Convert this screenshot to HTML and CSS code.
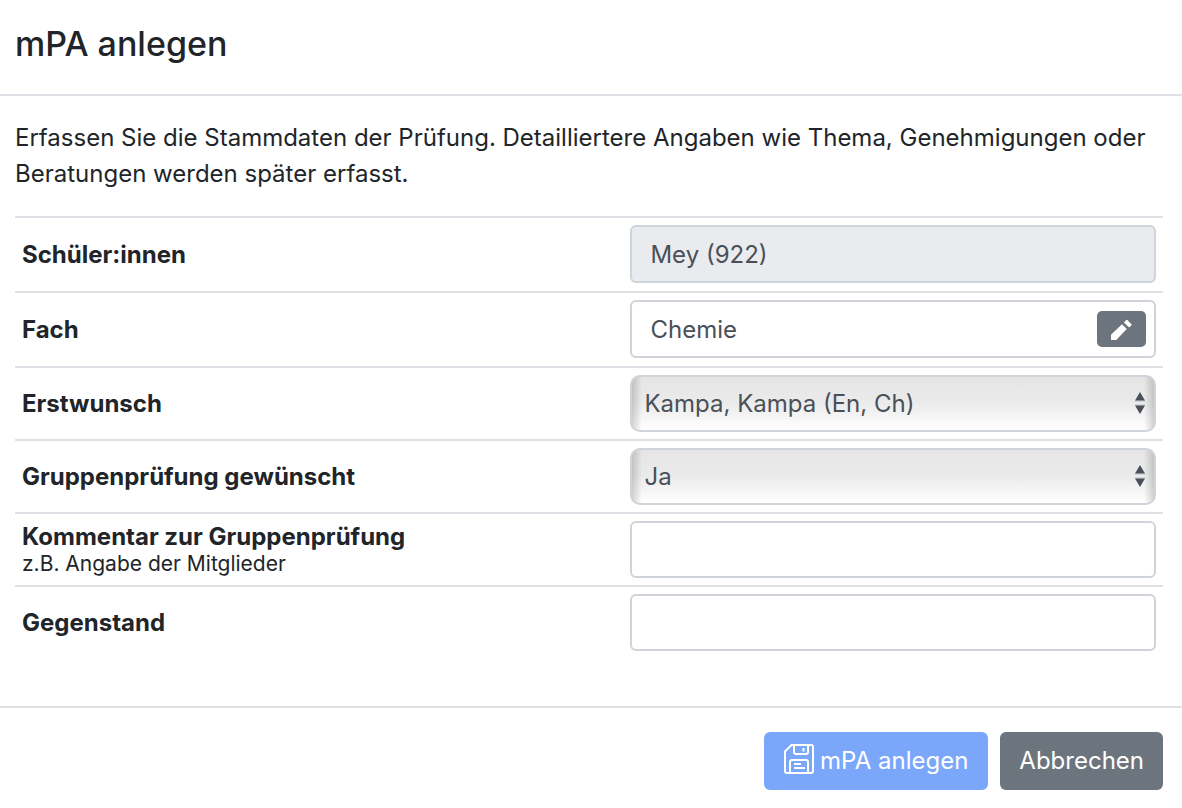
FILE: index.html
```
<!DOCTYPE html>
<html lang="de">
<head>
<meta charset="utf-8">
<meta name="viewport" content="width=device-width, initial-scale=1">
<title>mPA anlegen</title>
<link rel="stylesheet" href="styles.css">
</head>
<body>
<form class="dialog">
  <header class="dialog-header">
    <h1 class="dialog-title">mPA anlegen</h1>
  </header>
  <main class="dialog-body">
    <p class="intro">Erfassen Sie die Stammdaten der Prüfung. Detailliertere Angaben wie Thema, Genehmigungen oder Beratungen werden später erfasst.</p>
    <table class="fields">
      <tbody>
        <tr>
          <th scope="row"><label for="students">Schüler:innen</label></th>
          <td class="cell-tall"><input class="control control-tall control-locked" id="students" type="text" value="Mey (922)" readonly></td>
        </tr>
        <tr>
          <th scope="row"><label for="subject">Fach</label></th>
          <td class="cell-tall">
            <div class="field">
              <input class="control control-tall" id="subject" type="text" value="Chemie" readonly>
              <button class="edit" type="button" aria-label="Fach bearbeiten">
                <svg class="edit-icon" viewBox="0 0 22 22" aria-hidden="true"><path d="M0 16.500V22h5.500L16.500 10.500 11.500 5.500zM13.500 3.600L15.900 1Q16.500.4 17.200 1L21.400 5.400Q22 6 21.400 6.600L19 9z"/></svg>
              </button>
            </div>
          </td>
        </tr>
        <tr>
          <th scope="row"><label for="first-choice">Erstwunsch</label></th>
          <td>
            <div class="field">
              <select class="control control-select" id="first-choice"><option>Kampa, Kampa (En, Ch)</option></select>
              <svg class="arrows" viewBox="0 0 12 22" aria-hidden="true"><path class="arrow-line" d="M1 9h10M1 13h10"/><path d="M6 0l5 8.500H1zM1 13.500h10L6 22z"/></svg>
            </div>
          </td>
        </tr>
        <tr>
          <th scope="row"><label for="group">Gruppenprüfung gewünscht</label></th>
          <td>
            <div class="field">
              <select class="control control-select" id="group"><option>Ja</option><option>Nein</option></select>
              <svg class="arrows" viewBox="0 0 12 22" aria-hidden="true"><path class="arrow-line" d="M1 9h10M1 13h10"/><path d="M6 0l5 8.500H1zM1 13.500h10L6 22z"/></svg>
            </div>
          </td>
        </tr>
        <tr>
          <th scope="row"><label for="comment">Kommentar zur Gruppenprüfung</label><small class="hint" id="comment-hint">z.B. Angabe der Mitglieder</small></th>
          <td><input class="control" id="comment" type="text" aria-describedby="comment-hint"></td>
        </tr>
        <tr>
          <th scope="row"><label for="topic">Gegenstand</label></th>
          <td><input class="control" id="topic" type="text"></td>
        </tr>
      </tbody>
    </table>
  </main>
  <footer class="dialog-footer">
    <button class="button button-primary" type="submit">
      <svg class="save-icon" viewBox="0 0 30 30" aria-hidden="true"><path d="M7.500 1H27a2 2 0 0 1 2 2v24a2 2 0 0 1-2 2H3a2 2 0 0 1-2-2V7.500zM10 1v7a2 2 0 0 0 2 2h10a2 2 0 0 0 2-2V1M6 29V18a2 2 0 0 1 2-2h14a2 2 0 0 1 2 2v11M19.500 4v3.500M10 20h7M10 24h11"/></svg>
      <span>mPA anlegen</span>
    </button>
    <button class="button button-secondary" type="button">Abbrechen</button>
  </footer>
</form>
</body>
</html>
```
FILE: styles.css
```
* {
  box-sizing: border-box;
}

body {
  margin: 0;
  background: #fff;
  color: #212529;
  font-family: Inter, "Liberation Sans", sans-serif;
  font-size: 24px;
  line-height: 36px;
}

.dialog {
  display: flex;
  flex-direction: column;
}

.dialog-header {
  padding: 22px 15px 28px;
  border-bottom: 2px solid #dee2e6;
}

.dialog-title {
  margin: 0;
  font-size: 34px;
  font-weight: 500;
  line-height: 44px;
}

.dialog-body {
  padding: 24px 19px 48px 15px;
}

.intro {
  margin: 0 0 24px;
}

.fields {
  width: 100%;
  table-layout: fixed;
  border-spacing: 0;
}

.fields th,
.fields td {
  padding: 7px;
  border-top: 2px solid #dee2e6;
  text-align: left;
  vertical-align: middle;
}

.fields th {
  width: 53%;
  padding-top: 0;
  padding-bottom: 0;
  font-weight: 700;
  line-height: 28px;
}

.fields .cell-tall {
  padding-bottom: 8px;
}

.hint {
  display: block;
  font-size: 21px;
  font-weight: 400;
  line-height: 26px;
}

.field {
  position: relative;
}

.control {
  display: block;
  width: 100%;
  height: 57px;
  padding: 0 18px;
  border: 2px solid #ced4da;
  border-radius: 6px;
  background: #fff;
  color: #495057;
  font: inherit;
}

.control-tall {
  height: 58px;
}

.control-locked {
  background: #e9ebef;
}

.control-select {
  padding: 0 40px 0 12px;
  border-radius: 10px;
  appearance: none;
  background:
    linear-gradient(to right, rgba(0, 0, 0, 0.16), transparent 10px, transparent calc(100% - 10px), rgba(0, 0, 0, 0.16)),
    linear-gradient(#e5e5e5, #ebebeb 50%, #fff);
}

.arrows {
  position: absolute;
  top: 17px;
  right: 10px;
  width: 12px;
  height: 22px;
  fill: #495057;
  pointer-events: none;
}

.arrow-line {
  fill: none;
  stroke: #bcbec0;
  stroke-width: 1;
}

.edit {
  position: absolute;
  top: 11px;
  right: 10px;
  display: flex;
  align-items: center;
  justify-content: center;
  width: 49px;
  height: 36px;
  padding: 0;
  border: 0;
  border-radius: 5px;
  background: #6c757d;
}

.edit-icon {
  width: 21px;
  height: 21px;
  fill: #fff;
}

.dialog-footer {
  display: flex;
  justify-content: flex-end;
  gap: 12px;
  padding: 24px 19px 18px;
  border-top: 2px solid #dee2e6;
}

.button {
  display: flex;
  align-items: center;
  gap: 6px;
  height: 58px;
  padding: 0 20px;
  border: 0;
  border-radius: 6px;
  color: #fff;
  font: inherit;
}

.button-primary {
  background: #7ba7fb;
}

.button-secondary {
  padding: 0 19px;
  background: #6c757d;
}

.save-icon {
  width: 30px;
  height: 30px;
  margin-bottom: 4px;
  fill: none;
  stroke: #fff;
  stroke-width: 2;
}
```
